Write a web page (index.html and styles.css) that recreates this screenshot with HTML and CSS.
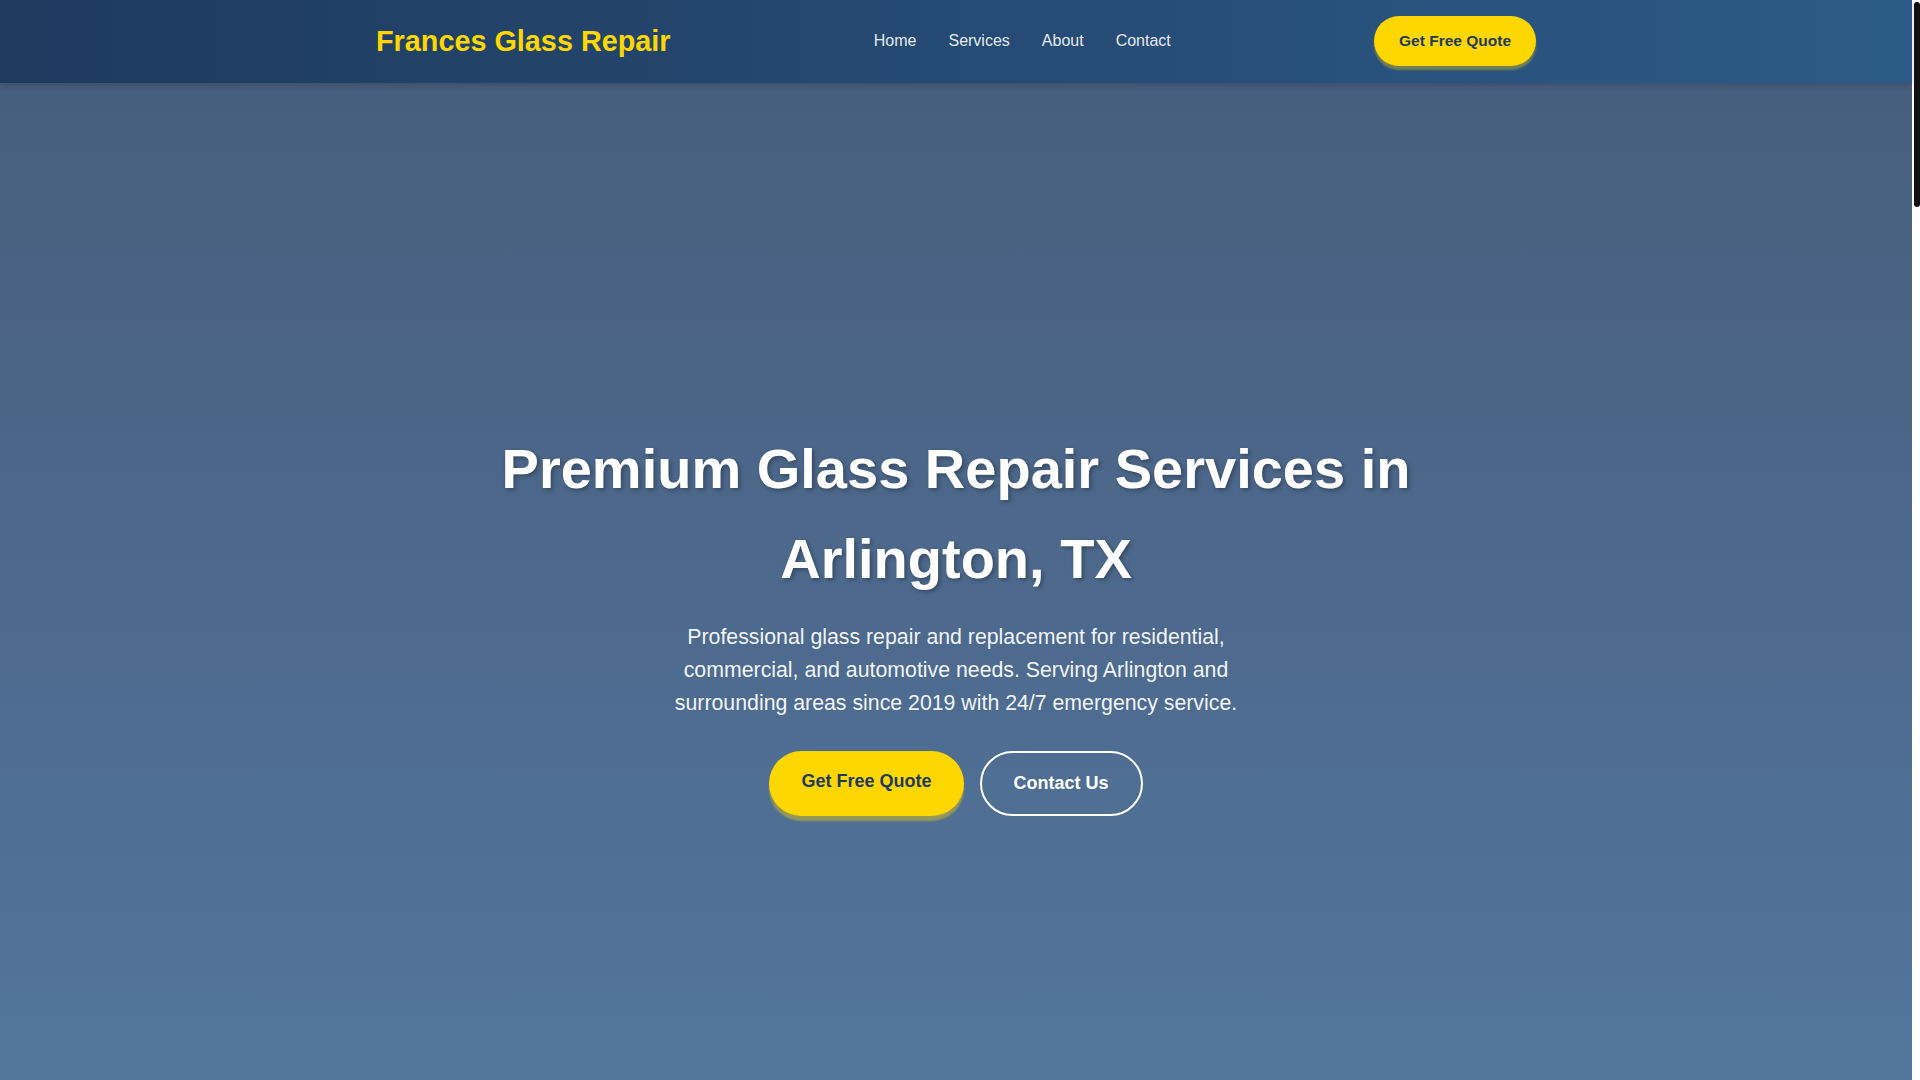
FILE: index.html
```html
<!DOCTYPE html>
<html lang="en">
<head>
<meta charset="utf-8">
<title>Frances Glass Repair</title>
<link rel="stylesheet" href="styles.css">
</head>
<body>
<div class="page">
  <header class="site-header">
    <div class="container header-inner">
      <a class="logo" href="#">Frances Glass Repair</a>
      <nav class="main-nav">
        <a href="#">Home</a>
        <a href="#services">Services</a>
        <a href="#about">About</a>
        <a href="#contact">Contact</a>
      </nav>
      <a class="btn btn-quote-sm" href="#contact">Get Free Quote</a>
    </div>
  </header>
  <main>
    <section class="hero">
      <div class="hero-content">
        <h1 class="hero-title">Premium Glass Repair Services in Arlington, TX</h1>
        <p class="hero-text">Professional glass repair and replacement for residential, commercial, and automotive needs. Serving Arlington and surrounding areas since 2019 with 24/7 emergency service.</p>
        <div class="hero-actions">
          <a class="btn btn-primary" href="#contact">Get Free Quote</a>
          <a class="btn btn-outline" href="#contact">Contact Us</a>
        </div>
      </div>
    </section>
  </main>
</div>
<div class="scroll-rail" aria-hidden="true"><div class="scroll-thumb"></div></div>
</body>
</html>
```
FILE: styles.css
```css
* { box-sizing: border-box; }

html, body { overflow-x: hidden; }

body {
  margin: 0;
  display: flex;
  align-items: flex-start;
  font-family: "Liberation Sans", Arial, sans-serif;
  color: #333;
  background: #ffffff;
}

.page {
  flex: 1;
  min-width: 0;
}

.scroll-rail {
  position: sticky;
  top: 0;
  width: 8px;
  height: 100vh;
  flex: 0 0 8px;
  background: #ffffff;
  padding: 2px 0 0 2px;
}

.scroll-thumb {
  width: 6px;
  height: 205px;
  background: #111111;
  border-radius: 3px;
}

a { text-decoration: none; }

.container {
  max-width: 1200px;
  margin: 0 auto;
  padding: 0 20px;
}

.site-header {
  position: relative;
  z-index: 2;
  background: linear-gradient(90deg, #1e3a5f 0%, #2c5a87 100%);
  box-shadow: 0 2px 6px rgba(0, 0, 0, 0.18);
}

.header-inner {
  display: flex;
  align-items: center;
  justify-content: space-between;
  padding-top: 16px;
  padding-bottom: 17px;
}

.logo {
  color: #ffd700;
  font-size: 28.8px;
  font-weight: 700;
  line-height: 1.2;
}

.main-nav {
  display: flex;
  gap: 32px;
}

.main-nav a {
  color: rgba(255, 255, 255, 0.9);
  font-size: 16px;
}

.btn {
  display: inline-block;
  font-weight: 700;
  border-radius: 50px;
  color: #1e3a5f;
}

.btn-quote-sm {
  background: #ffd700;
  font-size: 15.5px;
  line-height: 18px;
  padding: 16px 25px;
  box-shadow: 0 4px 2px rgba(255, 215, 0, 0.35);
}

.hero {
  min-height: 100vh;
  display: flex;
  align-items: center;
  justify-content: center;
  text-align: center;
  background: linear-gradient(180deg, #485e7d 0%, #4d6a8e 50%, #53789e 100%);
  color: #ffffff;
  padding: 0 20px;
}

.hero-content {
  max-width: 1000px;
  margin-top: -6px;
}

.hero-title {
  margin: 0 0 18px;
  font-size: 56px;
  line-height: 1.6;
  font-weight: 700;
  text-shadow: 2px 2px 4px rgba(0, 0, 0, 0.3);
}

.hero-text {
  max-width: 600px;
  margin: 0 auto 31px;
  font-size: 21.3px;
  line-height: 33px;
  color: rgba(255, 255, 255, 0.95);
}

.hero-actions {
  display: flex;
  justify-content: center;
  gap: 16px;
}

.btn-primary {
  background: #ffd700;
  font-size: 18px;
  line-height: 28.8px;
  padding: 16px 32px 20px;
  box-shadow: 0 5px 2px rgba(255, 215, 0, 0.4);
}

.btn-outline {
  color: #ffffff;
  border: 2px solid #ffffff;
  font-size: 18px;
  line-height: 28.8px;
  padding: 16px 32px;
}
```
